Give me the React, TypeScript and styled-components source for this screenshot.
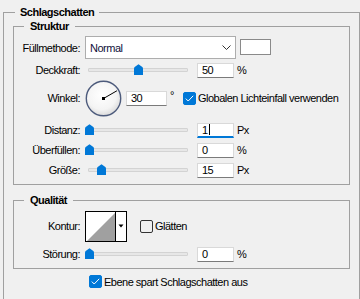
import React from "react";
import styled, { createGlobalStyle } from "styled-components";

const GlobalStyle = createGlobalStyle`
  html, body {
    margin: 0;
    padding: 0;
    background: #f0f0f0;
  }
  body {
    width: 360px;
    height: 299px;
    overflow: hidden;
    font-family: "Liberation Sans", Arial, sans-serif;
    font-size: 11px;
    letter-spacing: -0.5px;
    color: #000;
  }
`;

const Panel = styled.fieldset`
  box-sizing: border-box;
  width: 357px;
  margin: 6px 0 0 3px;
  padding: 1px 9px 12px 9px;
  border: 1px solid #a0a0a0;
  min-width: 0;
`;

const Section = styled.fieldset<{ $mt?: number; $pt: number; $pb: number }>`
  box-sizing: border-box;
  width: 100%;
  margin: ${(p) => p.$mt ?? 0}px 0 0 0;
  padding: ${(p) => p.$pt}px 0 ${(p) => p.$pb}px 0;
  border: 1px solid #a0a0a0;
  min-width: 0;
`;

const Title = styled.legend<{ $ml: number; $px: number }>`
  margin-left: ${(p) => p.$ml}px;
  padding: 0 ${(p) => p.$px}px;
  font-weight: bold;
  line-height: 13px;
`;

const Row = styled.div<{ $h: number; $mb?: number; $ml?: number; $mt?: number }>`
  display: flex;
  align-items: center;
  height: ${(p) => p.$h}px;
  margin: ${(p) => p.$mt ?? 0}px 0 ${(p) => p.$mb ?? 0}px ${(p) => p.$ml ?? 0}px;
  white-space: nowrap;
`;

const Label = styled.span`
  flex-shrink: 0;
  width: 66px;
  margin-right: 5px;
  text-align: right;
`;

const Select = styled.div`
  box-sizing: border-box;
  display: flex;
  align-items: center;
  justify-content: space-between;
  width: 151px;
  height: 23px;
  padding: 0 4px 0 4px;
  background: #fff;
  border: 1px solid #adadad;
  color: #10103a;
`;

const ColorSwatch = styled.div`
  box-sizing: border-box;
  width: 31px;
  height: 16px;
  margin-left: 4px;
  margin-top: -2px;
  background: #fff;
  border: 1px solid #8a8a8a;
`;

const Slider = styled.div`
  position: relative;
  box-sizing: border-box;
  display: flex;
  align-items: center;
  width: 106px;
  height: 16px;
  padding: 0 3px;
`;

const Track = styled.div`
  box-sizing: border-box;
  width: 100%;
  height: 4px;
  background: #e7e7e7;
  border: 1px solid #d3d3d3;
  border-radius: 1px;
`;

const Thumb = styled.svg`
  position: absolute;
  top: 2px;
  width: 9px;
  height: 11px;
`;

const Field = styled.div<{ $w?: number; $ml?: number; $focused?: boolean }>`
  box-sizing: border-box;
  display: flex;
  align-items: center;
  width: ${(p) => p.$w ?? 37}px;
  height: 15px;
  margin-left: ${(p) => p.$ml ?? 6}px;
  padding-left: 4px;
  background: #fff;
  border: 1px solid #d9d9d9;
  border-bottom: ${(p) => (p.$focused ? "2px solid #0078d7" : "1px solid #7a7a7a")};
`;

const Caret = styled.span`
  display: inline-block;
  width: 1px;
  height: 11px;
  margin-left: 1px;
  background: #000;
`;

const Unit = styled.span`
  margin-left: 3px;
`;

const Degree = styled.span`
  align-self: flex-start;
  margin: 11px 0 0 3px;
`;

const Box = styled.span<{ $checked?: boolean }>`
  box-sizing: border-box;
  display: inline-flex;
  align-items: center;
  justify-content: center;
  width: 13px;
  height: 13px;
  margin-right: 2px;
  border-radius: 2px;
  background: ${(p) => (p.$checked ? "#0078d7" : "transparent")};
  border: 1px solid ${(p) => (p.$checked ? "#0078d7" : "#333")};
`;

const CheckItem = styled.span<{ $ml: number }>`
  display: inline-flex;
  align-items: center;
  margin-left: ${(p) => p.$ml}px;
`;

const Dial = styled.svg`
  flex-shrink: 0;
  width: 37px;
  height: 37px;
  margin-right: 4px;
`;

const ContourPicker = styled.svg`
  width: 42px;
  height: 31px;
`;

type SliderRowProps = {
  label: string;
  at: number;
  value: string;
  unit: string;
  focused?: boolean;
};

const SliderRow = ({ label, at, value, unit, focused }: SliderRowProps) => (
  <>
    <Label>{label}</Label>
    <Slider>
      <Track />
      <Thumb viewBox="0 0 9 11" style={{ left: Math.round(at * 98) }}>
        <path d="M0 11 V4.5 Q0 3.4 1 2.7 L4.5 0.3 L8 2.7 Q9 3.4 9 4.5 V11 Z" fill="#0078d7" />
      </Thumb>
    </Slider>
    <Field $focused={focused}>
      {value}
      {focused && <Caret />}
    </Field>
    <Unit>{unit}</Unit>
  </>
);

const CheckBox = ({ checked, label, ml }: { checked?: boolean; label: string; ml: number }) => (
  <CheckItem $ml={ml}>
    <Box $checked={checked}>
      {checked && (
        <svg width="9" height="7" viewBox="0 0 9 7">
          <polyline points="0.8,3.6 3.2,6 8.2,0.8" fill="none" stroke="#fff" strokeWidth="1" />
        </svg>
      )}
    </Box>
    {label}
  </CheckItem>
);

export default function App() {
  const angle = (30 * Math.PI) / 180;
  const hx = 18.5 + 15.5 * Math.cos(angle);
  const hy = 18.5 - 15.5 * Math.sin(angle);
  return (
    <>
      <GlobalStyle />
      <Panel>
        <Title $ml={2} $px={5}>Schlagschatten</Title>
        <Section $pt={3} $pb={6}>
          <Title $ml={10} $px={6}>Struktur</Title>
          <Row $h={23} $mb={3}>
            <Label>Füllmethode:</Label>
            <Select>
              Normal
              <svg width="9" height="5" viewBox="0 0 9 5">
                <polyline points="0.5,0.5 4.5,4.5 8.5,0.5" fill="none" stroke="#333" strokeWidth="1" />
              </svg>
            </Select>
            <ColorSwatch />
          </Row>
          <Row $h={16}>
            <SliderRow label="Deckkraft:" at={0.5} value="50" unit="%" />
          </Row>
          <Row $h={40} $mb={4}>
            <Label>Winkel:</Label>
            <Dial viewBox="0 0 37 37">
              <defs>
                <radialGradient id="dialFill" cx="0.45" cy="0.4" r="0.6">
                  <stop offset="0" stopColor="#ffffff" />
                  <stop offset="0.7" stopColor="#f4f4f4" />
                  <stop offset="1" stopColor="#dcdcdc" />
                </radialGradient>
              </defs>
              <circle cx="18.5" cy="18.5" r="17.2" fill="url(#dialFill)" stroke="#4d5b7c" strokeWidth="1.4" />
              <line x1="18.5" y1="18.5" x2={hx} y2={hy} stroke="#000" strokeWidth="1" />
              <rect x="17" y="17" width="3" height="3" fill="#000" />
            </Dial>
            <Field $w={41} $ml={0}>30</Field>
            <Degree>°</Degree>
            <CheckBox checked label="Globalen Lichteinfall verwenden" ml={9} />
          </Row>
          <Row $h={16} $mb={4}>
            <SliderRow label="Distanz:" at={0} value="1" unit="Px" focused />
          </Row>
          <Row $h={16} $mb={4}>
            <SliderRow label="Überfüllen:" at={0} value="0" unit="%" />
          </Row>
          <Row $h={16}>
            <SliderRow label="Größe:" at={0.12} value="15" unit="Px" />
          </Row>
        </Section>
        <Section $mt={9} $pt={4} $pb={6}>
          <Title $ml={10} $px={6}>Qualität</Title>
          <Row $h={30} $mb={5}>
            <Label>Kontur:</Label>
            <ContourPicker viewBox="0 0 42 31">
              <rect x="0.5" y="0.5" width="41" height="30" fill="#fff" stroke="#000" />
              <polygon points="2,30 30,2 30,30" fill="#a0a0a0" />
              <line x1="30.5" y1="1" x2="30.5" y2="30" stroke="#000" />
              <polygon points="33.5,13.5 38.5,13.5 36,16.5" fill="#000" />
            </ContourPicker>
            <CheckBox label="Glätten" ml={13} />
          </Row>
          <Row $h={16}>
            <SliderRow label="Störung:" at={0} value="0" unit="%" />
          </Row>
        </Section>
        <Row $h={13} $ml={76} $mt={6}>
          <CheckBox checked label="Ebene spart Schlagschatten aus" ml={0} />
        </Row>
      </Panel>
    </>
  );
}
